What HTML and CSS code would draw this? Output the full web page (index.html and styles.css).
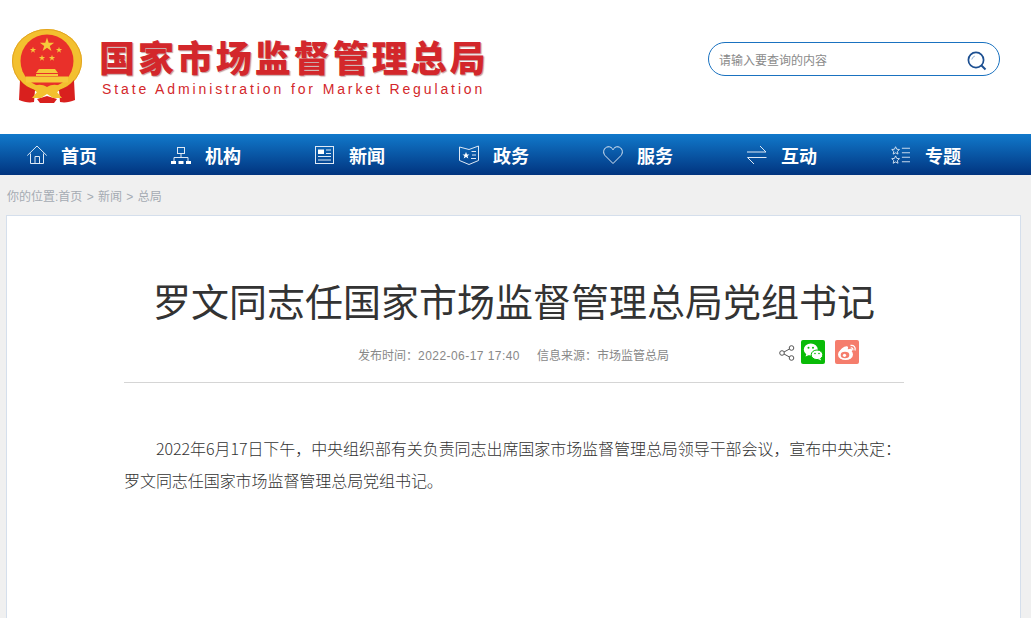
FILE: index.html
```html
<!DOCTYPE html>
<html lang="zh-CN">
<head>
    <meta charset="UTF-8">
    <meta name="viewport" content="width=device-width, initial-scale=1.0">
    <title>罗文同志任国家市场监督管理总局党组书记</title>
    <link rel="stylesheet" href="styles.css">
</head>
<body>

    <div class="header">
        <div class="logo">
            <svg class="emblem" viewBox="0 0 70 75" width="70" height="75">
                <defs>
                    <polygon id="star" points="0,-10 2.300,-3.100 9.500,-3.100 3.700,1.200 5.900,8.100 0,3.800 -5.900,8.100 -3.700,1.200 -9.500,-3.100 -2.300,-3.100"/>
                </defs>
                <ellipse cx="35" cy="32" rx="35" ry="32" fill="#f3c02f"/>
                <ellipse cx="35" cy="32" rx="34.500" ry="31.500" fill="none" stroke="#e2a422" stroke-width="1"/>
                <circle cx="35" cy="32" r="26.500" fill="#e9302a"/>
                <g fill="#f6c93b">
                    <use href="#star" transform="translate(35 16) scale(.75)"/>
                    <use href="#star" transform="translate(21 21) scale(.33)"/>
                    <use href="#star" transform="translate(47 21) scale(.33)"/>
                    <use href="#star" transform="translate(30 29) scale(.33)"/>
                    <use href="#star" transform="translate(40 29) scale(.33)"/>
                    <path d="M27 40h16l3 4h-22z M24 45h22v2h-22z M14 47.500h42v6h-42z"/>
                </g>
                <path d="M8 51c4 5 9 8 15 10l-1 12c-5 1-10 0-15-2z" fill="#d9201e"/>
                <path d="M62 51c-4 5-9 8-15 10l1 12c5 1 10 0 15-2z" fill="#d9201e"/>
                <path d="M25 70l10-3 10 3-3 4H28z" fill="#d9201e"/>
                <path d="M20 58c5-3 10-3 15 0 5-3 10-3 15 0l-5 5 5 6h-9l-6-4-6 4h-9l5-6z" fill="#f3c02f"/>
            </svg>
            <div class="logo-text">
                <div class="logo-cn">国家市场监督管理总局</div>
                <div class="logo-en">State Administration for Market Regulation</div>
            </div>
        </div>
        <div class="search">
            <span class="search-text">请输入要查询的内容</span>
            <svg viewBox="0 0 20 20" width="20" height="20">
                <circle cx="9" cy="9" r="7.600" fill="none" stroke="#1c4f91" stroke-width="1.700"/>
                <path d="M4.800 8.500a4.400 4.400 0 0 1 3-3.400" fill="none" stroke="#8fb0d6" stroke-width="1"/>
                <path d="M14.500 14.500l4 4" stroke="#1c4f91" stroke-width="2"/>
            </svg>
        </div>
    </div>

    <div class="nav">
        <a class="nav-item">
            <svg viewBox="0 0 20 20" width="20" height="20" class="nav-icon">
                <path d="M.3 10.500L10 1l9.700 9.500M3.500 8.500v10h13v-10M8 18.500v-7h4.500v7"/>
            </svg>
            <span>首页</span>
        </a>
        <a class="nav-item">
            <svg viewBox="0 0 20 20" width="20" height="20" class="nav-icon">
                <rect x="6.500" y="2.500" width="7" height="6"/>
                <path d="M10 8.500V12.500M3 16v-3.500h14V16"/>
                <path class="solid" d="M0 16h5V19H0zM7.500 16h5V19h-5zM15 16h5V19h-5z"/>
            </svg>
            <span>机构</span>
        </a>
        <a class="nav-item">
            <svg viewBox="0 0 20 20" width="20" height="20" class="nav-icon">
                <rect x=".5" y="1.500" width="18" height="17"/>
                <path class="solid" d="M3 4.500h6v4.500H3z"/>
                <path d="M11 5h5M11 8.500h5M3 11.500h13M3 15h13"/>
            </svg>
            <span>新闻</span>
        </a>
        <a class="nav-item">
            <svg viewBox="0 0 20 20" width="20" height="20" class="nav-icon">
                <path d="M.5 2l9.500 2.500L19.500 1v14.500L10 19.500.5 15.500z"/>
                <path d="M12.500 6.500h4.500M13 10h4M12 13.500h5"/>
                <polygon class="solid" points="7,7 8,9.500 10.500,9.500 8.500,11 9.300,13.500 7,12 4.700,13.500 5.500,11 3.500,9.500 6,9.500"/>
            </svg>
            <span>政务</span>
        </a>
        <a class="nav-item">
            <svg viewBox="0 0 20 20" width="20" height="20" class="nav-icon">
                <path d="M10 18.500L2 10.500C-.5 7.500 .5 2.500 5 1.800c2.500-.3 4 1 5 3 1-2 2.500-3.300 5-3 4.500.7 5.500 5.700 3 8.700z"/>
            </svg>
            <span>服务</span>
        </a>
        <a class="nav-item">
            <svg viewBox="0 0 20 20" width="20" height="20" class="nav-icon">
                <path d="M0 7h19L13 1M19.500 12.500H.5L7 19"/>
            </svg>
            <span>互动</span>
        </a>
        <a class="nav-item">
            <svg viewBox="0 0 22 20" width="20" height="18" class="nav-icon">
                <polygon points="5,.8 6.300,3.600 9.300,3.900 7,6 7.700,9 5,7.500 2.300,9 3,6 .7,3.900 3.700,3.600"/>
                <polygon points="5,11 6.300,13.800 9.300,14.100 7,16.200 7.700,19.200 5,17.700 2.300,19.200 3,16.200 .7,14.100 3.700,13.800"/>
                <path d="M12 2.500h9M12 7.500h9M12 12.500h9M12 17.500h9"/>
            </svg>
            <span>专题</span>
        </a>
    </div>

    <div class="crumbs">你的位置:首页 &gt; 新闻 &gt; 总局</div>

    <div class="card">
        <h1 class="title">罗文同志任国家市场监督管理总局党组书记</h1>
        <div class="meta">
            <span class="meta-date">发布时间<span class="colon">：</span><span class="meta-num">2022-06-17 17:40</span></span>
            <span class="meta-source">信息来源<span class="colon">：</span>市场监管总局</span>
            <div class="share">
                <svg viewBox="0 0 16 16" width="16" height="16" class="share-icon">
                    <circle cx="12.500" cy="3" r="2.300"/>
                    <circle cx="3" cy="8" r="2.300"/>
                    <circle cx="12.500" cy="13" r="2.300"/>
                    <path d="M5 7l5.500-3M5 9l5.500 3"/>
                </svg>
                <span class="badge badge-wechat">
                    <svg viewBox="0 0 24 24" width="24" height="24">
                        <ellipse cx="9.800" cy="9.500" rx="7" ry="6" fill="#fff"/>
                        <path d="M5.500 13.500l-1 3 3.500-1.500z" fill="#fff"/>
                        <ellipse cx="16" cy="14.800" rx="5.800" ry="4.800" fill="#fff" stroke="#09bb07" stroke-width="1"/>
                        <path d="M19 18l1.200 2.500-3.200-1.500z" fill="#fff"/>
                        <circle cx="7.500" cy="7.800" r="1" fill="#09bb07"/>
                        <circle cx="12" cy="7.800" r="1" fill="#09bb07"/>
                        <circle cx="14" cy="13.500" r=".8" fill="#09bb07"/>
                        <circle cx="18" cy="13.500" r=".8" fill="#09bb07"/>
                    </svg>
                </span>
                <span class="badge badge-weibo">
                    <svg viewBox="0 0 24 24" width="24" height="24">
                        <ellipse cx="10.500" cy="14.500" rx="7.500" ry="5.500" fill="#fff"/>
                        <path d="M4 13c1-4 6-7.500 8.500-6.500 1.500 1-.5 3 .5 3 3-1.500 5-.5 4 2" fill="#fff"/>
                        <ellipse cx="10" cy="15" rx="4.300" ry="3.200" fill="#f57d6c"/>
                        <circle cx="9.500" cy="15.300" r="1.600" fill="#fff"/>
                        <path d="M15.500 5.500c3-.8 5.500 1.500 4.500 5M15.800 8c1.500-.3 2.400.7 2 2.300" fill="none" stroke="#fff" stroke-width="1.300"/>
                    </svg>
                </span>
            </div>
        </div>
        <div class="content">
            <p>2022年6月17日下午，中央组织部有关负责同志出席国家市场监督管理总局领导干部会议，宣布中央决定：罗文同志任国家市场监督管理总局党组书记。</p>
        </div>
    </div>

</body>
</html>
```

FILE: styles.css
```css
body {
    margin: 0;
    background: #f0f0f0;
    font-family: "Liberation Sans", "Noto Sans CJK SC", sans-serif;
}
.header {
    height: 134px;
    background: #fff;
    display: flex;
    justify-content: space-between;
    box-sizing: border-box;
    padding: 29px 31px 0 12px;
}
.logo {
    display: flex;
    align-items: flex-start;
}
.emblem {
    margin-right: 17px;
}
.logo-text {
    padding-top: 5px;
}
.logo-cn {
    font-family: "Noto Sans CJK SC", sans-serif;
    font-size: 36px;
    line-height: 44px;
    font-weight: 900;
    letter-spacing: 2.95px;
    color: #d3272b;
    text-shadow: 1px 1px 1px rgba(120, 40, 40, .45);
    white-space: nowrap;
}
.logo-en {
    font-size: 14px;
    line-height: 16px;
    letter-spacing: 2.88px;
    color: #d3272b;
    margin: 3px 0 0 3px;
    white-space: nowrap;
}
.search {
    width: 292px;
    height: 34px;
    margin-top: 13px;
    box-sizing: border-box;
    border: 1px solid #1a72c0;
    border-radius: 17px;
    display: flex;
    align-items: center;
    justify-content: space-between;
    padding: 0 12px 0 10px;
}
.search svg {
    margin-top: 3px;
}
.search-text {
    font-size: 12px;
    color: #8a8a8a;
}
.nav {
    height: 41px;
    background: linear-gradient(#1179cb, #01347f);
    display: grid;
    grid-template-columns: repeat(7, 144px);
    padding-left: 27px;
}
.nav-item {
    display: flex;
    align-items: center;
    color: #fff;
    font-family: "Noto Sans CJK SC", sans-serif;
    font-size: 18px;
    font-weight: 700;
}
.nav-icon {
    margin-right: 14px;
    flex: none;
    fill: none;
    stroke: #dfe9f5;
    stroke-width: 1;
}
.nav-icon .solid {
    fill: #fff;
    stroke: none;
}
.crumbs {
    height: 40px;
    line-height: 44px;
    padding-left: 7px;
    font-size: 12px;
    word-spacing: 1px;
    color: #a5abb3;
}
.card {
    margin-left: 6px;
    width: 1015px;
    box-sizing: border-box;
    height: 403px;
    background: #fff;
    border: 1px solid #d5dfec;
    border-bottom: none;
    padding: 0 116px 0 117px;
}
.title {
    margin: 57px 0 0;
    font-family: "Noto Sans CJK SC", sans-serif;
    font-size: 38px;
    line-height: 54px;
    font-weight: 400;
    color: #333;
    text-align: center;
    white-space: nowrap;
}
.meta {
    height: 55px;
    border-bottom: 1px solid #d5d5d5;
    padding: 0 0 0 234px;
    display: flex;
    font-size: 12px;
    color: #888;
}
.meta-date, .meta-source {
    padding-top: 19px;
    line-height: 18px;
}
.meta-num {
    letter-spacing: .45px;
}
.colon {
    font-family: "Noto Sans CJK TC", sans-serif;
}
.meta-source {
    margin-left: 17px;
}
.share {
    display: flex;
    align-items: flex-start;
    margin-left: 110px;
    padding-top: 13px;
}
.share-icon {
    margin: 5px 6px 0 0;
    fill: none;
    stroke: #555;
    stroke-width: 1;
}
.badge {
    width: 24px;
    height: 24px;
    border-radius: 2px;
    margin-right: 10px;
}
.badge svg {
    display: block;
}
.badge-wechat {
    background: #09bb07;
}
.badge-weibo {
    background: #f57d6c;
}
.content {
    padding-top: 49px;
}
.content p {
    margin: 0;
    font-family: "Noto Sans CJK SC", sans-serif;
    font-weight: 300;
    font-size: 16px;
    letter-spacing: -.06px;
    line-height: 32px;
    color: #333;
    text-indent: 32px;
}
```
